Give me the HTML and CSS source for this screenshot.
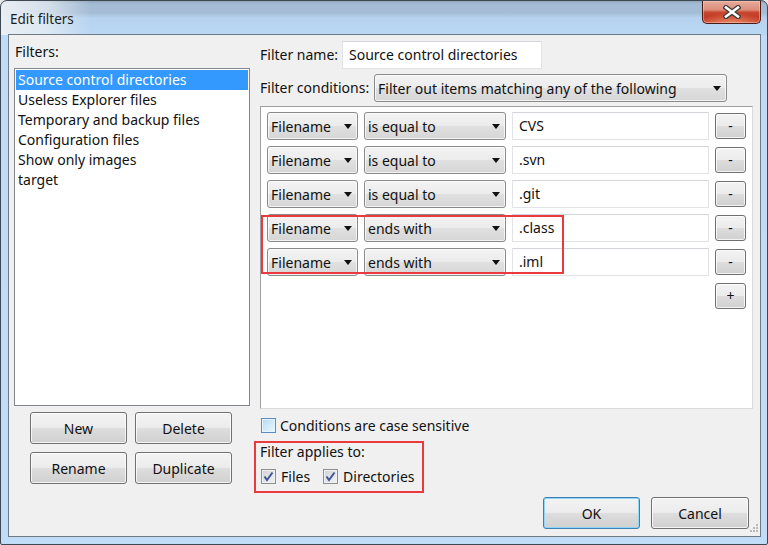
FILE: index.html
```html
<!DOCTYPE html>
<html lang="en">
<head>
  <meta charset="UTF-8">
  <title>Edit filters</title>
  <link rel="stylesheet" href="styles.css">
</head>
<body>
  <div class="window">
    <div class="titlebar">
      <span class="title">Edit filters</span>
      <div class="close-btn">
        <svg width="18" height="14" viewBox="0 0 18 14">
          <path d="M3 2.5 L15 11.5 M15 2.5 L3 11.5" stroke="#3b3b3b" stroke-width="5" stroke-linecap="square"/>
          <path d="M3 2.5 L15 11.5 M15 2.5 L3 11.5" stroke="#ffffff" stroke-width="2.6" stroke-linecap="square"/>
        </svg>
      </div>
    </div>

    <div class="client">
      <!-- left: filter list -->
      <div class="col-left">
        <div class="label filters-label">Filters:</div>
        <div class="listbox">
          <div class="item selected">Source control directories</div>
          <div class="item">Useless Explorer files</div>
          <div class="item">Temporary and backup files</div>
          <div class="item">Configuration files</div>
          <div class="item">Show only images</div>
          <div class="item">target</div>
        </div>
        <div class="list-buttons">
          <button class="btn">New</button>
          <button class="btn">Delete</button>
          <button class="btn">Rename</button>
          <button class="btn">Duplicate</button>
        </div>
      </div>

      <!-- right: filter details -->
      <div class="col-right">
        <div class="field-row name-row">
          <span class="label name-label">Filter name:</span>
          <div class="textbox name-box">Source control directories</div>
        </div>
        <div class="field-row cond-row">
          <span class="label cond-label">Filter conditions:</span>
          <div class="combo cond-combo"><span>Filter out items matching any of the following</span><i class="arrow"></i></div>
        </div>

        <div class="conditions">
          <div class="cond">
            <div class="combo c-type"><span>Filename</span><i class="arrow"></i></div>
            <div class="combo c-op"><span>is equal to</span><i class="arrow"></i></div>
            <div class="textbox c-value">CVS</div>
            <button class="btn small">-</button>
          </div>
          <div class="cond">
            <div class="combo c-type"><span>Filename</span><i class="arrow"></i></div>
            <div class="combo c-op"><span>is equal to</span><i class="arrow"></i></div>
            <div class="textbox c-value">.svn</div>
            <button class="btn small">-</button>
          </div>
          <div class="cond">
            <div class="combo c-type"><span>Filename</span><i class="arrow"></i></div>
            <div class="combo c-op"><span>is equal to</span><i class="arrow"></i></div>
            <div class="textbox c-value">.git</div>
            <button class="btn small">-</button>
          </div>
          <div class="cond">
            <div class="combo c-type"><span>Filename</span><i class="arrow"></i></div>
            <div class="combo c-op"><span>ends with</span><i class="arrow"></i></div>
            <div class="textbox c-value">.class</div>
            <button class="btn small">-</button>
          </div>
          <div class="cond">
            <div class="combo c-type"><span>Filename</span><i class="arrow"></i></div>
            <div class="combo c-op"><span>ends with</span><i class="arrow"></i></div>
            <div class="textbox c-value">.iml</div>
            <button class="btn small">-</button>
          </div>
          <div class="add-row">
            <button class="btn small">+</button>
          </div>
          <div class="highlight cond-highlight"></div>
        </div>

        <div class="check-row case-row">
          <span class="checkbox focus"></span>
          <span>Conditions are case sensitive</span>
        </div>

        <div class="applies">
          <div class="label">Filter applies to:</div>
          <div class="check-row applies-row">
            <span class="checkbox checked">
              <svg width="13" height="13" viewBox="0 0 13 13"><path d="M2.5 6.5 L5 10 L10.5 2.5" fill="none" stroke="#41569a" stroke-width="2"/></svg>
            </span>
            <span class="files-text">Files</span>
            <span class="checkbox checked">
              <svg width="13" height="13" viewBox="0 0 13 13"><path d="M2.5 6.5 L5 10 L10.5 2.5" fill="none" stroke="#41569a" stroke-width="2"/></svg>
            </span>
            <span>Directories</span>
          </div>
        </div>

        <div class="footer">
          <button class="btn default">OK</button>
          <button class="btn cancel">Cancel</button>
        </div>
      </div>

      <svg class="grip" width="10" height="10" viewBox="0 0 10 10">
        <rect x="7" y="1" width="2" height="2" fill="#b9b9b9"/>
        <rect x="4" y="4" width="2" height="2" fill="#b9b9b9"/>
        <rect x="7" y="4" width="2" height="2" fill="#b9b9b9"/>
        <rect x="1" y="7" width="2" height="2" fill="#b9b9b9"/>
        <rect x="4" y="7" width="2" height="2" fill="#b9b9b9"/>
        <rect x="7" y="7" width="2" height="2" fill="#b9b9b9"/>
      </svg>
    </div>
  </div>
</body>
</html>
```

FILE: styles.css
```css
/* Page */
body {
  margin: 0;
  width: 768px;
  height: 545px;
  background: #e6e8ea;
  font-family: 'Noto Sans', 'Open Sans', sans-serif;
  font-size: 14px;
  color: #111;
  overflow: hidden;
}

button {
  font-family: inherit;
  font-size: 14px;
  color: #111;
  padding: 0;
  cursor: default;
}

/* Aero window frame */
.window {
  box-sizing: border-box;
  width: 768px;
  height: 545px;
  border: 1px solid #3d4853;
  border-radius: 7px 7px 2px 2px;
  display: flex;
  flex-direction: column;
  position: relative;
  background:
    linear-gradient(to right, rgba(236, 240, 244, 0.95) 0, rgba(236, 240, 244, 0.7) 45px, rgba(236, 240, 244, 0) 90px) top left / 100% 34px no-repeat,
    linear-gradient(to bottom, #93a8be 0, #a3bbd4 3px, #a5bdd6 12px, #b5d2ee 17px, #bad7f3 34px, #bfdbf6 35px, #c0dcf7 100%);
}

.titlebar {
  height: 33px;
  display: flex;
  align-items: flex-start;
}

.title {
  margin: 8px 0 0 9px;
  line-height: 20px;
  font-size: 13.5px;
  color: #1b1b1b;
}

.close-btn {
  margin-left: auto;
  margin-right: 6px;
  width: 57px;
  height: 22px;
  border: 1px solid #4a1a14;
  border-top: none;
  border-radius: 0 0 5px 5px;
  display: flex;
  align-items: center;
  justify-content: center;
  background:
    radial-gradient(ellipse 60% 45% at 50% 100%, rgba(240, 150, 110, 0.8), rgba(240, 150, 110, 0) 100%),
    linear-gradient(to bottom, #e7ab9c 0, #dc8d7a 40%, #c8452f 52%, #c23a25 75%, #cc4a33 100%);
  box-shadow: inset 0 0 0 1px rgba(255, 210, 200, 0.45);
}

/* Client area */
.client {
  box-sizing: border-box;
  flex: 1;
  margin: 0 6px 7px 7px;
  border: 1px solid #6e7a86;
  background: #f0f0f0;
  display: flex;
  gap: 10px;
  padding: 0 6px 0 5px;
  position: relative;
}

.label {
  line-height: 20px;
  white-space: nowrap;
}

/* Left column */
.col-left {
  width: 236px;
  display: flex;
  flex-direction: column;
}

.filters-label {
  margin: 7px 0 6px 1px;
}

.listbox {
  box-sizing: border-box;
  height: 338px;
  border: 1px solid #828790;
  background: #fff;
  padding: 1px;
}

.item {
  height: 20px;
  line-height: 20px;
  padding-left: 2px;
  white-space: nowrap;
}

.item.selected {
  background: #3399ff;
  color: #fff;
}

.list-buttons {
  display: grid;
  grid-template-columns: 97px 97px;
  gap: 8px;
  margin: 6px 0 0 16px;
}

/* Win7 style buttons */
.btn {
  box-sizing: border-box;
  height: 32px;
  border: 1px solid #707070;
  border-radius: 3px;
  background: linear-gradient(to bottom, #f3f3f3 0%, #ececec 48%, #dddddd 52%, #d0d0d0 100%);
  box-shadow: inset 0 0 0 1px rgba(255, 255, 255, 0.75);
}

.btn.small {
  width: 31px;
  height: 26px;
  line-height: 20px;
}

.btn.default {
  width: 97px;
  border-color: #3c7fb1;
  box-shadow: inset 0 0 0 1px #8fd6f7;
}

.btn.cancel {
  width: 98px;
}

/* Right column */
.col-right {
  width: 493px;
  display: flex;
  flex-direction: column;
}

.field-row {
  display: flex;
  align-items: center;
}

.name-row {
  margin-top: 6px;
}

.name-label {
  width: 82px;
}

.cond-row {
  margin-top: 5px;
}

.cond-label {
  width: 114px;
}

.textbox {
  box-sizing: border-box;
  height: 28px;
  line-height: 26px;
  padding-left: 6px;
  background: #fff;
  border: 1px solid #e1e3e6;
  border-top-color: #d3d6da;
  white-space: nowrap;
}

.name-box {
  width: 200px;
}

.combo {
  box-sizing: border-box;
  height: 28px;
  display: flex;
  align-items: center;
  padding: 0 5px 0 3px;
  border: 1px solid #8a8a8a;
  border-radius: 3px;
  background: linear-gradient(to bottom, #f3f3f3 0%, #ececec 48%, #e0e0e0 52%, #d6d6d6 100%);
  box-shadow: inset 0 0 0 1px rgba(255, 255, 255, 0.7);
  white-space: nowrap;
}

.combo .arrow {
  margin-left: auto;
  width: 0;
  height: 0;
  border-left: 4px solid transparent;
  border-right: 4px solid transparent;
  border-top: 5px solid #111;
}

.cond-combo {
  width: 353px;
}

/* Conditions list */
.conditions {
  box-sizing: border-box;
  height: 303px;
  margin-top: 4px;
  padding: 5px 6px 0 6px;
  background: #fff;
  border: 1px solid;
  border-color: #a0a0a0 #dadada #dadada #a0a0a0;
  display: flex;
  flex-direction: column;
  gap: 6px;
  position: relative;
}

.cond {
  display: flex;
  align-items: center;
  gap: 6px;
  height: 28px;
}

.c-type {
  width: 91px;
}

.c-op {
  width: 142px;
}

.c-value {
  width: 197px;
}

.add-row {
  display: flex;
  justify-content: flex-end;
  margin-top: 1px;
}

/* red annotation boxes */
.highlight {
  border: 2px solid #ea3a3d;
}

.cond-highlight {
  position: absolute;
  left: 0;
  top: 108px;
  width: 299px;
  height: 55px;
}

.check-row {
  display: flex;
  align-items: center;
  height: 20px;
  white-space: nowrap;
}

.case-row {
  margin-top: 6px;
  gap: 4px;
}

.checkbox {
  box-sizing: border-box;
  width: 15px;
  height: 15px;
  margin-left: 1px;
  border: 1px solid #8e8f8f;
  display: flex;
  align-items: center;
  justify-content: center;
}

.checkbox.focus {
  border-color: #5b8fc0;
  background: linear-gradient(135deg, #b4d9f4 0%, #d6ecfb 60%, #e9f6fe 100%);
  box-shadow: inset 0 0 0 1px #e6f4fd;
}

.checkbox.checked {
  background: linear-gradient(135deg, #cfd1d6 0%, #e5e6e9 60%, #f2f2f3 100%);
  box-shadow: inset 0 0 0 1px #eef0f2;
}

.applies {
  box-sizing: border-box;
  width: 170px;
  height: 52px;
  margin: 6px 0 0 -6px;
  padding: 0 0 0 4px;
  border: 2px solid #ea3a3d;
}

.applies .label {
  line-height: 18px;
}

.applies-row {
  margin-top: 5px;
  gap: 5px;
}

.files-text {
  margin-right: 7px;
}

.footer {
  display: flex;
  justify-content: flex-end;
  gap: 11px;
  margin-top: 4px;
  padding-right: 4px;
}

.grip {
  position: absolute;
  right: 1px;
  bottom: 3px;
}
```
